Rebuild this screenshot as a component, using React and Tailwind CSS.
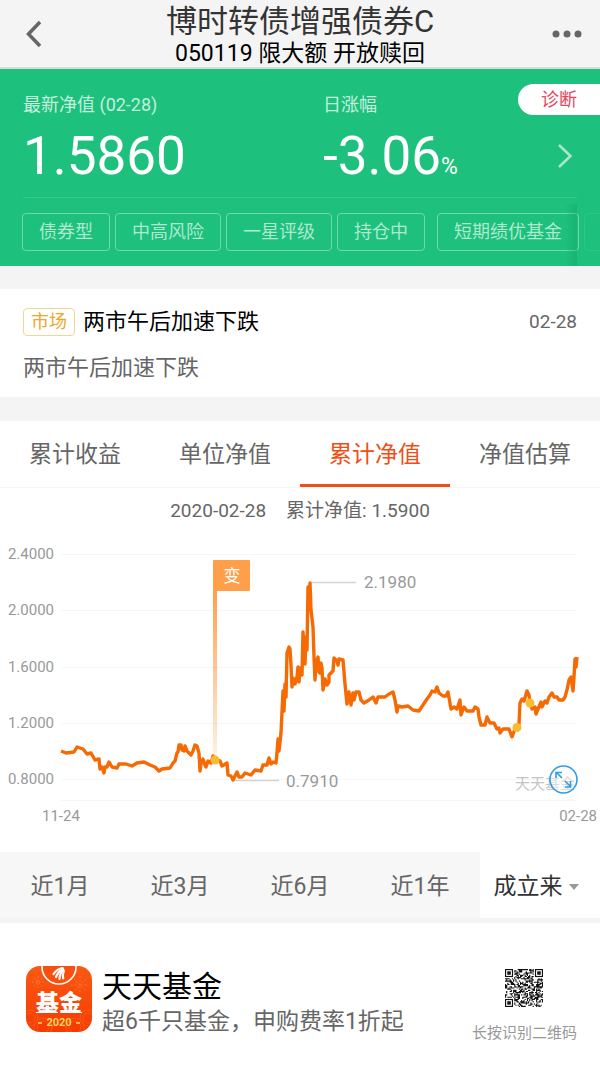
import { useState } from 'react'

const tags = ['债券型', '中高风险', '一星评级', '持仓中']
const chartTabs = ['累计收益', '单位净值', '累计净值', '净值估算']
const ranges = ['近1月', '近3月', '近6月', '近1年']

const yTicks = [
  { label: '2.4000', y: 14 },
  { label: '2.0000', y: 70 },
  { label: '1.6000', y: 127 },
  { label: '1.2000', y: 183 },
  { label: '0.8000', y: 239 },
]

// net value history, in chart coordinates
const navLine = `
  61,211 66,213 74,212 77,207 83,209 87,214 91,213 95,220 99,219 100,229 102,227 104,233
  105,227 107,227 109,222 112,227 117,228 119,224 126,224 132,226 137,223 144,222 150,225
  155,227 159,231 162,229 170,228 173,223 175,221 177,213 178,212 179,205 181,205 182,210
  184,211 185,206 187,211 188,212 191,215 193,211 195,205 197,206 199,213 200,231 201,224
  203,219 205,225 206,227 208,221 211,223 213,216 216,220 220,221 222,226 227,223 228,235
  231,236 233,240 235,236 237,232 239,237 242,237 245,233 251,235 255,230 261,231 263,225
  267,225 269,218 271,224 273,222 276,223 277,213 278,199 279,211 281,193 283,151 284,171
  285,144 286,157 287,113 289,107 290,109 291,125 292,147 293,138 295,144 297,137 298,127
  299,142 300,128 302,135 303,92 304,107 305,124 306,97 307,110 308,47 309,68 310,43
  311,70 313,87 314,117 315,140 316,123 318,117 319,132 320,133 321,123 322,128 323,150
  325,139 327,145 329,142 329,135 333,131 334,118 337,121 338,125 339,119 343,120 345,144
  347,164 349,152 351,165 353,153 354,160 356,152 359,152 361,160 364,163 369,160 373,157
  376,163 378,157 385,157 389,154 393,152 395,160 397,172 398,166 402,167 408,166 413,170
  419,171 423,165 427,159 430,155 432,151 435,152 437,147 439,153 443,156 446,156 448,152
  451,169 454,167 457,169 460,160 461,175 464,167 467,171 473,171 475,167 478,169 479,177
  481,185 485,185 487,177 490,183 494,183 497,189 499,188 500,193 503,189 509,189 512,197
  515,189 517,187 519,184 520,163 522,159 524,161 527,151 529,155 530,163 532,169 535,167
  536,174 538,169 541,162 542,167 545,161 547,163 549,157 552,153 554,157 557,157 559,160
  563,160 565,157 567,150 569,140 571,137 573,151 574,137 575,119 576,127 577,117`

const QR_SIZE = 33

function inFinder(x, y) {
  return (x < 8 && y < 8) || (x >= QR_SIZE - 8 && y < 8) || (x < 8 && y >= QR_SIZE - 8)
}

function buildQr() {
  const cells = []
  let seed = 20200228
  for (let y = 0; y < QR_SIZE; y++) {
    for (let x = 0; x < QR_SIZE; x++) {
      seed = (seed * 1103515245 + 12345) % 2147483648
      if (!inFinder(x, y) && seed / 2147483648 > 0.48) {
        cells.push(`M${x} ${y}h1v1h-1z`)
      }
    }
  }
  return cells.join('')
}

const qrPath = buildQr()

function QrCode() {
  const corners = [[0, 0], [QR_SIZE - 7, 0], [0, QR_SIZE - 7]]
  return (
    <svg className="w-[38px] h-[38px]" viewBox={`0 0 ${QR_SIZE} ${QR_SIZE}`} fill="#111">
      <path d={qrPath} />
      {corners.map(([x, y]) => (
        <g key={`${x}-${y}`}>
          <rect x={x + 0.5} y={y + 0.5} width="6" height="6" fill="none" stroke="#111" />
          <rect x={x + 2} y={y + 2} width="3" height="3" />
        </g>
      ))}
    </svg>
  )
}

function AppLogo() {
  return (
    <svg className="w-[66px] h-[66px] shrink-0" viewBox="0 0 66 66">
      <defs>
        <linearGradient id="logoBg" x1="0" y1="0" x2="0" y2="1">
          <stop offset="0" stopColor="#fa5a14" />
          <stop offset="1" stopColor="#f53a02" />
        </linearGradient>
        <clipPath id="logoClip">
          <rect width="66" height="66" rx="14" />
        </clipPath>
      </defs>
      <g clipPath="url(#logoClip)">
        <rect width="66" height="66" fill="url(#logoBg)" />
        <g stroke="#ff8a4a" strokeWidth="1" strokeDasharray="2 1.5" opacity="0.6">
          <path d="M12 10v12M6 16h12M8 12l8 8M16 12l-8 8" />
          <path d="M54 10v18M45 19h18M48 13l12 12M60 13L48 25" />
        </g>
        <g fill="none" stroke="#ff7a3c" strokeWidth="0.8" opacity="0.5">
          <circle cx="4" cy="52" r="8" />
          <circle cx="4" cy="52" r="5" />
          <circle cx="17" cy="61" r="9" />
          <circle cx="17" cy="61" r="6" />
          <circle cx="33" cy="66" r="8" />
          <circle cx="49" cy="61" r="9" />
          <circle cx="49" cy="61" r="6" />
          <circle cx="62" cy="52" r="8" />
          <circle cx="62" cy="52" r="5" />
        </g>
        <circle cx="33" cy="1" r="17" fill="#f9500f" stroke="#fff" strokeWidth="1.6" />
        <g fill="none" stroke="#fff" strokeLinecap="round" strokeWidth="2.2">
          <path d="M27.5 8C30 4.5 33 2.5 36.5 2" />
          <path d="M30 11C31.5 7.5 34 4.5 37 3" />
          <path d="M33.5 13C33.5 9.5 35 6 37.5 4" />
          <path d="M37.200 12.5C36.5 10 36.800 7.5 37.800 5" />
        </g>
        <text x="33" y="45" textAnchor="middle" fontSize="23" fontWeight="900" fill="#fff">基金</text>
        <path d="M10 46.5h22M35 46.5h21" stroke="#fff" strokeWidth="1" />
        <text x="33" y="60" textAnchor="middle" fontSize="11" fontWeight="700" fill="#ffd65a">2020</text>
        <path d="M12 57h4M50 57h4" stroke="#ffd65a" strokeWidth="1.4" />
      </g>
    </svg>
  )
}

function NavChart() {
  return (
    <svg className="mt-[17px] w-full block" viewBox="0 0 600 312">
      <defs>
        <linearGradient id="pole" x1="0" y1="0" x2="0" y2="1">
          <stop offset="0" stopColor="#ff9f4a" />
          <stop offset="1" stopColor="#ff9f4a" stopOpacity="0.15" />
        </linearGradient>
      </defs>

      {yTicks.map(tick => (
        <g key={tick.label}>
          <path d={`M61 ${tick.y}.5H577`} stroke="#f6f6f6" />
          <text x="54" y={tick.y + 5} textAnchor="end" fontSize="15" fill="#999">{tick.label}</text>
        </g>
      ))}
      <path d="M61 260.5H577" stroke="#f6f6f6" />
      <text x="42" y="281" fontSize="15" fill="#999">11-24</text>
      <text x="597" y="281" textAnchor="end" fontSize="15" fill="#999">02-28</text>

      <text x="515" y="249" fontSize="15" fill="#c4c4c4">天天基金</text>

      <path d="M310 42.5H356M233 240.5H279" stroke="#d4d4d4" strokeWidth="1.5" />
      <text x="364" y="48" fontSize="17" fill="#999">2.1980</text>
      <text x="286" y="247" fontSize="17" fill="#999">0.7910</text>

      <polyline points={navLine} fill="none" stroke="#f66a04" strokeWidth="3.4" strokeLinejoin="round" />

      <rect x="213" y="50" width="4" height="166" fill="url(#pole)" />
      <rect x="213" y="20" width="37" height="31" rx="1" fill="#ff9f4a" />
      <text x="232" y="42" textAnchor="middle" fontSize="17" fill="#fff">变</text>

      <g fill="#f9bb32">
        <circle cx="215" cy="220" r="4.5" />
        <circle cx="517" cy="187.5" r="4.5" />
        <circle cx="530" cy="163" r="4.5" />
      </g>

      <g fill="none" stroke="#2e9cea" strokeWidth="1.6">
        <circle cx="563.5" cy="239.5" r="13.5" fill="#fff" fillOpacity="0.4" />
        <path d="M562 238l-5-5M556 238v-5.5h6M565 241l5 5M565 247h5.5v-6" />
      </g>
    </svg>
  )
}

function App() {
  const [activeTab, setActiveTab] = useState('累计净值')

  return (
    <div className="min-h-screen flex flex-col bg-[#f4f4f4] text-[#666] font-['Roboto','Noto_Sans_CJK_SC',sans-serif]">
      <header className="flex items-center justify-between px-[18px] h-[69px] border-b-2 border-[#d9d9d9]">
        <button aria-label="返回" className="w-9 pl-[6px]">
          <svg className="w-5 h-7" viewBox="0 0 20 28" fill="none" stroke="#666" strokeWidth="3.5">
            <path d="M16 2L4.5 14L16 26" />
          </svg>
        </button>
        <div className="pt-[2px] text-center">
          <h1 className="text-[31px] leading-[38px] text-[#333]">博时转债增强债券C</h1>
          <p className="text-[23px] leading-[26px] text-black">050119 限大额 开放赎回</p>
        </div>
        <button aria-label="更多" className="w-9 flex justify-end">
          <svg className="w-[30px] h-2" viewBox="0 0 30 8" fill="#666">
            <circle cx="4" cy="4" r="3.5" />
            <circle cx="15" cy="4" r="3.5" />
            <circle cx="26" cy="4" r="3.5" />
          </svg>
        </button>
      </header>

      <section className="relative bg-[#1dc07c] pt-[23px] pb-[15px] text-white">
        <div className="grid grid-cols-2">
          <div className="pl-[23px]">
            <div className="text-lg leading-[26px] text-[#c3efdc]">最新净值 (02-28)</div>
            <div className="mt-[6px] text-[53px] leading-[64px]">1.5860</div>
          </div>
          <div className="pl-[23px]">
            <div className="text-lg leading-[26px] text-[#c3efdc]">日涨幅</div>
            <div className="mt-[6px] flex items-center justify-between pr-[27px]">
              <div className="text-[53px] leading-[64px]">
                -3.06<span className="text-[23px] leading-none">%</span>
              </div>
              <button aria-label="查看详情">
                <svg className="w-4 h-[26px]" viewBox="0 0 16 26" fill="none" stroke="#a9e6cd" strokeWidth="2.5">
                  <path d="M2 2L13.5 13L2 24" />
                </svg>
              </button>
            </div>
          </div>
        </div>
        <a
          href="#diagnose"
          className="absolute right-0 top-[15px] rounded-l-full bg-white px-[23px] text-lg leading-[31px] text-[#e8475c]"
        >
          诊断
        </a>

        <div className="mx-[23px] mt-[9px] h-px bg-[#37c88c]"></div>

        <div className="mt-[15px] pl-[22px] flex gap-[5px] overflow-hidden text-lg text-[#aee9d0] whitespace-nowrap">
          {tags.map(tag => (
            <span key={tag} className="shrink-0 rounded border border-[#6fd8ad] px-4 leading-9">{tag}</span>
          ))}
          <span className="ml-[7px] shrink-0 rounded border border-[#6fd8ad] px-4 leading-9">短期绩优基金</span>
          <span className="w-8 shrink-0 rounded border border-[#2dc687]"></span>
        </div>
        <div className="absolute right-[23px] bottom-0 h-[62px] w-3 bg-linear-to-r from-transparent to-[#14a066]/40"></div>
      </section>

      <section className="mt-[23px] bg-white px-[23px] pt-[19px] pb-[13px]">
        <div className="flex items-center gap-2">
          <span className="rounded border border-[#f3d78c] px-[7px] text-lg leading-[26px] text-[#f0a52c]">市场</span>
          <h2 className="text-[22px] leading-7 text-black">两市午后加速下跌</h2>
          <time className="ml-auto text-[19px] leading-7">02-28</time>
        </div>
        <p className="mt-4 text-[22px] leading-8">两市午后加速下跌</p>
      </section>

      <section className="mt-6 bg-white">
        <nav className="grid grid-cols-4 border-b border-[#f6f6f6]">
          {chartTabs.map(tab => (
            <button
              key={tab}
              onClick={() => setActiveTab(tab)}
              className={
                tab === activeTab
                  ? 'h-[66px] pt-[5px] border-b-3 border-[#f04e14] text-[23px] text-[#f04e14]'
                  : 'h-[66px] pt-[2px] text-[23px]'
              }
            >
              {tab}
            </button>
          ))}
        </nav>

        <div className="mt-[11px] flex justify-center gap-5 text-[19px] leading-6">
          <span>2020-02-28</span>
          <span>累计净值: 1.5900</span>
        </div>
        <NavChart />

        <div className="grid grid-cols-5 bg-[#f7f7f7] text-[23px]">
          {ranges.map(range => (
            <button key={range} className="h-[66px] pt-1">{range}</button>
          ))}
          <label className="flex items-center justify-center gap-[6px] pt-1 pr-2 bg-white">
            <select aria-label="时间范围" className="appearance-none bg-transparent text-[#333]">
              <option>成立来</option>
            </select>
            <svg className="w-[10px] h-[6px]" viewBox="0 0 10 6" fill="#999">
              <path d="M0 0h10L5 6z" />
            </svg>
          </label>
        </div>
      </section>

      <footer className="mt-[5px] flex flex-1 items-start bg-white pl-[26px] pr-[23px] pt-[43px]">
        <AppLogo />
        <div className="ml-[10px] mt-[3px]">
          <div className="text-[30px] leading-9 text-black">天天基金</div>
          <div className="text-[23px] leading-[34px]">超6千只基金，申购费率1折起</div>
        </div>
        <div className="ml-auto mt-[3px] flex flex-col items-center">
          <QrCode />
          <div className="mt-[14px] text-[15px] leading-6 text-[#999]">长按识别二维码</div>
        </div>
      </footer>
    </div>
  )
}

export default App
